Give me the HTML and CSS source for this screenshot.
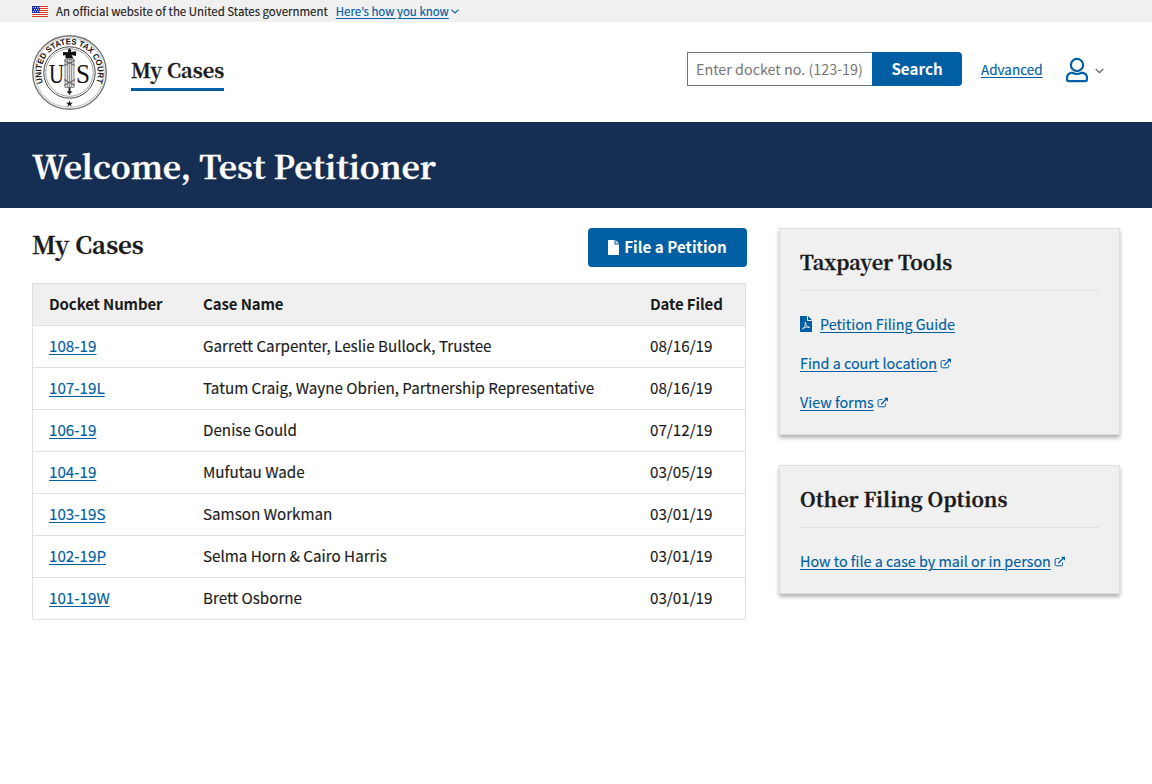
FILE: index.html
```html
<!DOCTYPE html>
<html lang="en">
<head>
<meta charset="utf-8">
<title>My Cases</title>
<link rel="stylesheet" href="styles.css">
</head>
<body>
<svg class="defs" width="0" height="0" aria-hidden="true">
  <symbol id="external" viewBox="0 0 12 11">
    <path d="M5.6 2.6H2.3Q1.1 2.6 1.1 3.8V8.6Q1.1 9.8 2.3 9.8H7.4Q8.6 9.8 8.6 8.6V6.6" fill="none" stroke="currentColor" stroke-width="1"/>
    <path d="M4.3 7.2L9.2 2.3" stroke="currentColor" stroke-width="1.3"/>
    <path d="M7 .8H11V4.8Z" fill="currentColor"/>
  </symbol>
</svg>
<div class="banner">
  <svg class="flag" width="16" height="11" viewBox="0 0 16 11">
    <rect width="16" height="11" fill="#fff"/>
    <path d="M0 .5H16M0 2.5H16M0 4.5H16M0 6.5H16M0 8.5H16M0 10.5H16" stroke="#db3e1f"/>
    <rect width="8" height="7" fill="#1e33b1"/>
    <path d="M1 1.5H8M2 3.5H8M1 5.5H8" stroke="#fff" stroke-dasharray="1 1" opacity=".75"/>
  </svg>
  <span class="banner-text">An official website of the United States government</span>
  <a class="banner-link" href="#">Here’s how you know</a>
  <svg class="banner-caret" width="8" height="5" viewBox="0 0 8 5"><path d="M.5 .7L4 4L7.5 .7" fill="none" stroke="#005ea2" stroke-width="1.1"/></svg>
</div>
<header class="header">
  <svg class="seal" width="77" height="76" viewBox="-.5 -.5 77 76">
    <g fill="none" stroke="#444">
      <circle cx="38" cy="38" r="36.8" stroke="#777" stroke-width="1.4"/>
      <circle cx="38" cy="38" r="34.8" stroke="#aaa" stroke-width=".8"/>
      <circle cx="38" cy="38" r="25.7" stroke-width="1"/>
      <circle cx="38" cy="38" r="23.8" stroke="#777" stroke-width=".7"/>
    </g>
    <path id="rim" d="M11.6 48.4A28.3 28.3 0 1 1 64.4 48.4" fill="none"/>
    <text class="seal-rim" textLength="109" lengthAdjust="spacingAndGlyphs"><textPath href="#rim" textLength="109" lengthAdjust="spacingAndGlyphs">UNITED STATES TAX COURT</textPath></text>
    <text class="seal-letter" x="17.5" y="48" textLength="15" lengthAdjust="spacingAndGlyphs">U</text>
    <text class="seal-letter" x="44.5" y="48" textLength="14" lengthAdjust="spacingAndGlyphs">S</text>
    <rect x="33.5" y="25" width="9" height="28" fill="#ddd" stroke="#777" stroke-width=".8"/>
    <path d="M36 25V53M38 25V53M40 25V53" stroke="#777" stroke-width=".7"/>
    <path d="M32.5 26L43.5 31M43.5 26L32.5 31M32.5 45L43.5 51M43.5 45L32.5 51" stroke="#666" stroke-width="1.1"/>
    <path d="M38 13.5L39.8 16L39.2 17.5L44.5 16.8V21.5L40 20.5L42 24H34V20.5L31.5 21V17.5L36.8 17.8L36.2 16Z" fill="#111"/>
    <path d="M38 53V60M36 57.5H40" stroke="#222" stroke-width="1.8"/>
    <path d="M38 66.1L38.8 68.2H41.4L39.4 69.7L40.1 72L38 70.6L35.9 72L36.6 69.7L34.6 68.2H37.2Z" fill="#111"/>
  </svg>
  <a class="nav-link" href="#">My Cases</a>
  <form class="search">
    <input class="search-input" placeholder="Enter docket no. (123-19)" aria-label="Docket number">
    <button class="search-button" type="button">Search</button>
  </form>
  <a class="advanced" href="#">Advanced</a>
  <svg class="user" width="24" height="26" viewBox="0 0 24 26">
    <g fill="none" stroke="#005ea2" stroke-width="2.2">
      <circle cx="12" cy="8" r="6.1"/>
      <path d="M7.2 15.7Q2 16.4 2 21V22Q2 24.2 4 24.2H20Q22 24.2 22 22V21Q22 16.4 16.8 15.7Q12 18.3 7.2 15.7Z"/>
    </g>
  </svg>
  <svg class="user-caret" width="9" height="6" viewBox="0 0 9 6"><path d="M.7 .8L4.5 4.6L8.3 .8" fill="none" stroke="#555" stroke-width="1.1"/></svg>
</header>
<div class="hero"><h1 class="hero-title">Welcome, Test Petitioner</h1></div>
<main class="content">
  <section class="cases">
    <div class="cases-head">
      <h2 class="cases-title">My Cases</h2>
      <button class="file-button" type="button">
        <svg width="11" height="15" viewBox="0 0 11 15"><path d="M0 0H6.5V4.5H11V15H0Z" fill="#fff"/><path d="M7.5 0L11 3.5H7.5Z" fill="#fff" opacity=".85"/></svg>
        <span class="file-label">File a Petition</span>
      </button>
    </div>
    <table class="table">
      <colgroup><col class="col-docket"><col class="col-name"><col></colgroup>
      <thead><tr><th>Docket Number</th><th>Case Name</th><th>Date Filed</th></tr></thead>
      <tbody>
        <tr><td><a href="#">108-19</a></td><td>Garrett Carpenter, Leslie Bullock, Trustee</td><td>08/16/19</td></tr>
        <tr><td><a href="#">107-19L</a></td><td>Tatum Craig, Wayne Obrien, Partnership Representative</td><td>08/16/19</td></tr>
        <tr><td><a href="#">106-19</a></td><td>Denise Gould</td><td>07/12/19</td></tr>
        <tr><td><a href="#">104-19</a></td><td>Mufutau Wade</td><td>03/05/19</td></tr>
        <tr><td><a href="#">103-19S</a></td><td>Samson Workman</td><td>03/01/19</td></tr>
        <tr><td><a href="#">102-19P</a></td><td>Selma Horn &amp; Cairo Harris</td><td>03/01/19</td></tr>
        <tr><td><a href="#">101-19W</a></td><td>Brett Osborne</td><td>03/01/19</td></tr>
      </tbody>
    </table>
  </section>
  <aside class="side">
    <div class="card">
      <h3 class="card-title">Taxpayer Tools</h3>
      <p class="card-link"><svg class="pdf" width="12" height="16" viewBox="0 0 12 16"><path d="M0 0H7V5H12V16H0Z" fill="#005ea2"/><path d="M8 0L12 4H8Z" fill="#005ea2"/><path d="M5.3 6C6 9.5 7 11 9.7 11.4C7 10.6 4.5 11.2 2.4 13C4.6 11.8 5.8 9 5.3 6Z" fill="none" stroke="#f0f0f0" stroke-width=".9"/></svg><a href="#">Petition Filing Guide</a></p>
      <p class="card-link"><a href="#">Find a court location</a><svg class="ext" width="12" height="11"><use href="#external"/></svg></p>
      <p class="card-link"><a href="#">View forms</a><svg class="ext" width="12" height="11"><use href="#external"/></svg></p>
    </div>
    <div class="card">
      <h3 class="card-title">Other Filing Options</h3>
      <p class="card-link"><a href="#">How to file a case by mail or in person</a><svg class="ext" width="12" height="11"><use href="#external"/></svg></p>
    </div>
  </aside>
</main>
</body>
</html>
```
FILE: styles.css
```css
* { box-sizing: border-box; }
body {
  margin: 0;
  background: #fff;
  color: #1b1b1b;
  font: 14.33px/20px "Source Sans Pro", "Noto Sans CJK KR", sans-serif;
}
.defs { position: absolute; }
a { color: #005ea2; text-decoration: underline; text-decoration-thickness: 1px; text-underline-offset: 2px; text-decoration-skip-ink: auto; }
h1, h2, h3, .nav-link { font-family: "Source Serif Pro", "Noto Serif CJK KR", "Liberation Serif", serif; font-weight: 700; margin: 0; white-space: nowrap; -webkit-text-stroke: .3px currentColor; }
p { margin: 0; }
.banner-text, .banner-link, .advanced, .card-link a, .table td { -webkit-text-stroke: .15px currentColor; }
.banner { height: 22px; background: #f0f0f0; padding: 0 32px; display: flex; align-items: center; font-size: 11.46px; line-height: 20px; white-space: nowrap; }
.banner-text { margin-left: 8px; }
.banner-link { margin-left: 8px; }
.banner-caret { margin-left: 2px; }
.header { height: 100px; padding: 0 48px 0 31px; display: flex; align-items: center; }
.seal { flex: none; margin-top: -1px; }
.seal-rim { font: bold 8.2px "Liberation Sans", sans-serif; fill: #111; }
.seal-letter { font: 27px "Liberation Serif", serif; fill: #111; }
.nav-link { margin-left: 23px; height: 38px; line-height: 34px; border-bottom: 3px solid #005ea2; color: #1b1b1b; text-decoration: none; font-size: 20px; width: 93px; }
.search { display: flex; margin: -6px 0 0 auto; height: 34px; }
.search-input { width: 185px; height: 34px; border: 1px solid #71767a; border-right: 0; border-radius: 0; padding: 0 0 2px 8px; font: 14.33px/20px "Noto Sans CJK KR", sans-serif; }
.search-input::placeholder { color: #757575; opacity: 1; }
.search-button { width: 90px; border: 0; border-radius: 0 4px 4px 0; background: #005ea2; color: #fff; font: bold 15.2px/20px "Noto Sans CJK KR", sans-serif; padding: 0 0 3px; }
.advanced { margin: -6px 0 0 19px; font-size: 13.5px; width: 62px; }
.user { margin: -4px 0 0 22px; }
.user-caret { margin: -3px 0 0 6px; }
.hero { height: 86px; background: #162e51; padding: 21px 32px; }
.hero-title { color: #fff; font-size: 31.9px; line-height: 44px; }
.content { display: grid; grid-template-columns: 715px 341px; column-gap: 32px; padding: 20px 32px 0; }
.cases-head { display: flex; justify-content: space-between; height: 55px; }
.cases-title { font-size: 24px; line-height: 32px; }
.file-button { width: 159px; height: 39px; border: 0; border-radius: 4px; background: #005ea2; color: #fff; display: flex; align-items: center; justify-content: center; gap: 5px; padding: 0; font: bold 15.2px/20px "Noto Sans CJK KR", sans-serif; white-space: nowrap; }
.file-label { padding-bottom: 3px; }
.table { width: 714px; table-layout: fixed; border-collapse: collapse; border: 1px solid #dcdee0; font-size: 15.2px; }
.col-docket { width: 154.5px; }
.col-name { width: 447px; }
.table th, .table td { height: 42px; padding: 0 16px 2px; text-align: left; white-space: nowrap; border-bottom: 1px solid #dfe1e2; }
.table td { padding-bottom: 4px; }
.table th { background: #f0f0f0; font-size: 15px; letter-spacing: -.12px; }
.side { display: flex; flex-direction: column; gap: 30px; }
.card { border: 1px solid #dcdee0; background: #f0f0f0; padding: 18px 20px 22px; box-shadow: 0 3px 4px rgba(0, 0, 0, .3); }
.card-title { font-size: 19.95px; line-height: 30px; height: 44px; border-bottom: 1px solid #dfe1e2; margin-bottom: 23px; }
.card-link { height: 20px; display: flex; align-items: center; white-space: nowrap; margin-bottom: 19px; }
.card-link:last-child { margin-bottom: 0; }
.pdf { margin-right: 8px; }
.ext { margin-left: 3px; color: #005ea2; }
```
